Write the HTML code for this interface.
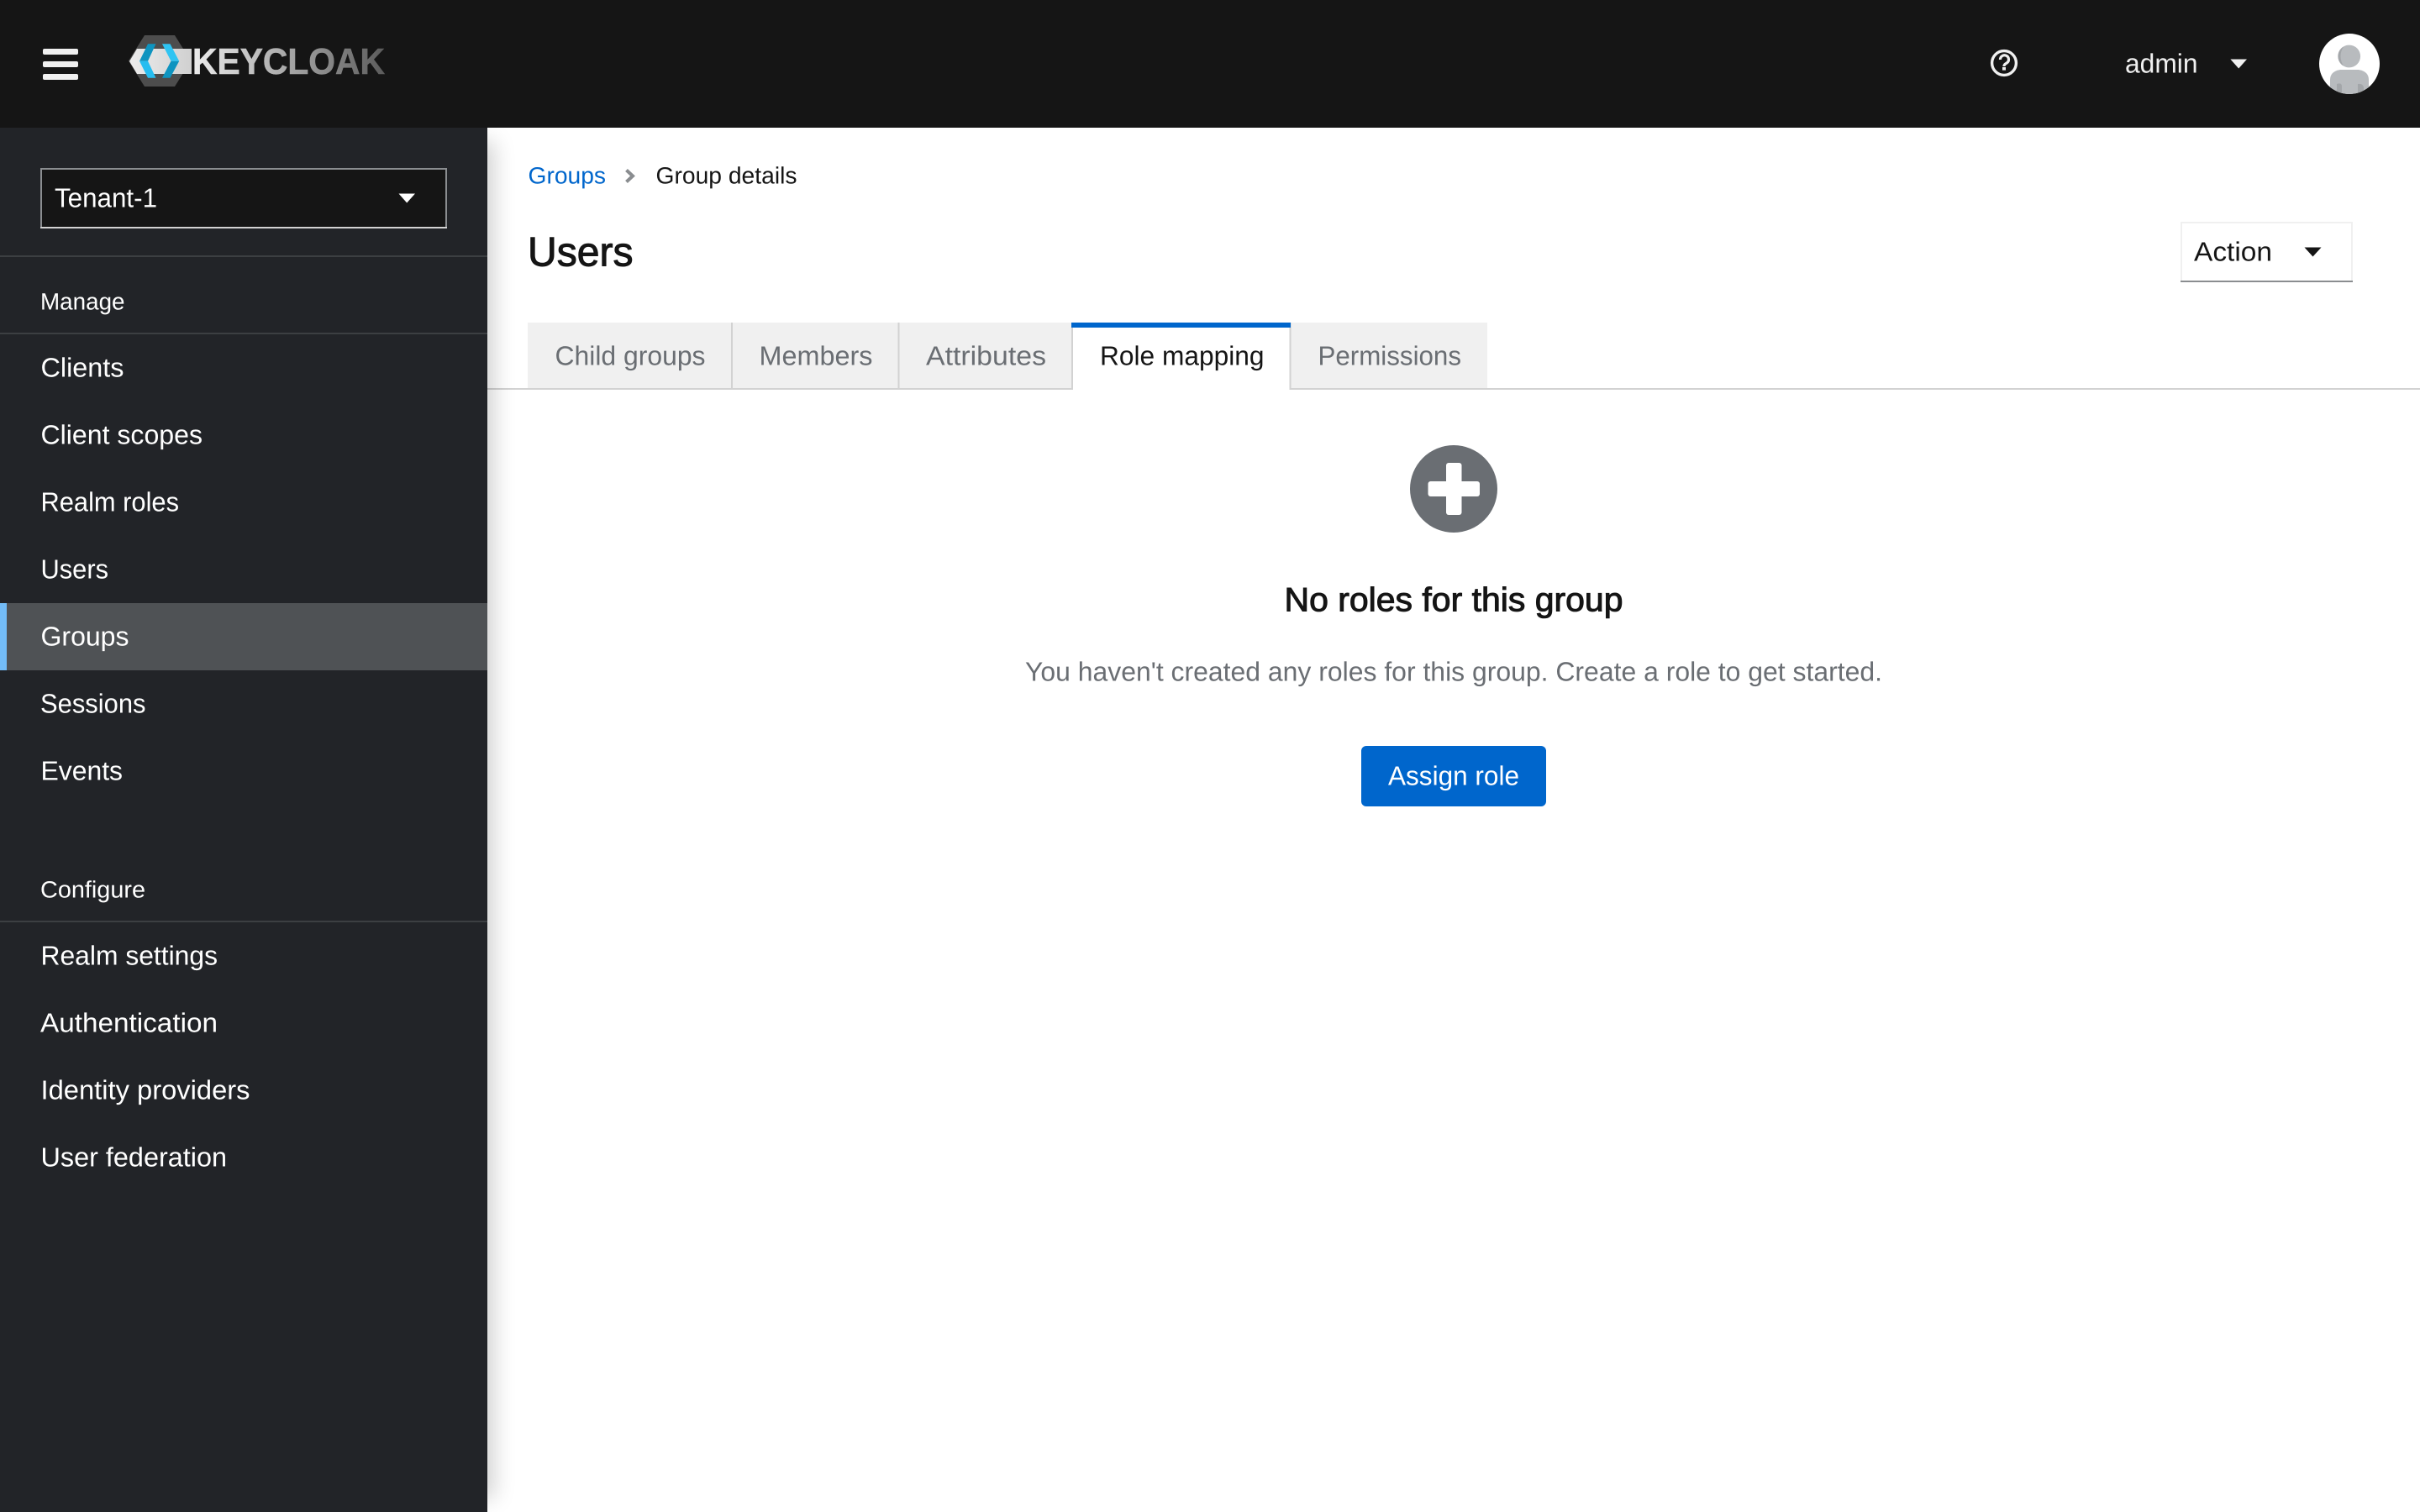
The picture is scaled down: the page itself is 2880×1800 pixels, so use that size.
<!DOCTYPE html>
<html lang="en">
<head>
<meta charset="utf-8">
<title>Keycloak - Group details</title>
<style>
html,body{margin:0;padding:0;width:2880px;height:1800px;overflow:hidden;background:#fff}
body{position:relative;font-family:"Liberation Sans",sans-serif}
header,nav,main{position:absolute;display:block}
header{left:0;top:0;width:2880px;height:152px;background:#151515;z-index:3}
nav{left:0;top:152px;width:580px;height:1648px;background:#222428;z-index:2;box-shadow:24px 0 24px -16px rgba(3,3,3,.18)}
main{left:580px;top:152px;width:2300px;height:1648px;background:#fff;z-index:1}
svg{position:absolute;left:0;top:0;display:block;overflow:visible}
text{font-family:"Liberation Sans",sans-serif;font-size:32px;text-rendering:geometricPrecision}
.n text,text.w{fill:#fff}
.s{font-size:28px}
.g{fill:#6a6e73}
.d{fill:#151515}
</style>
</head>
<body>
<main>
<svg width="2300" height="1648" viewBox="580 152 2300 1648">
  <!-- breadcrumb -->
  <text class="s" x="628.5" y="218.5" textLength="92.5" lengthAdjust="spacingAndGlyphs" fill="#0066cc">Groups</text>
  <path d="M745.5 202.5 L753 209.5 L745.5 216.5" fill="none" stroke="#8a8d90" stroke-width="4"/>
  <text class="s d" x="780.5" y="218.5" textLength="168" lengthAdjust="spacingAndGlyphs">Group details</text>
  <!-- title -->
  <text class="d" style="font-size:49px;stroke:#151515;stroke-width:1px" x="628" y="316.5" textLength="125.5" lengthAdjust="spacingAndGlyphs">Users</text>
  <!-- action -->
  <rect x="2596" y="265" width="203" height="70" fill="#fff" stroke="#f0f0f0" stroke-width="2"/>
  <rect x="2595" y="334" width="205" height="2" fill="#8a8d90"/>
  <text class="d" x="2611" y="310.5" textLength="93" lengthAdjust="spacingAndGlyphs">Action</text>
  <path d="M2742.5 294.5 H2762.5 L2752.5 305.5 Z" fill="#151515"/>
  <!-- tabs -->
  <rect x="580" y="462" width="2300" height="2" fill="#d2d2d2"/>
  <rect x="628" y="384" width="648" height="78" fill="#f0f0f0"/>
  <rect x="870" y="384" width="2" height="78" fill="#d2d2d2"/>
  <rect x="1068.5" y="384" width="2" height="78" fill="#d2d2d2"/>
  <rect x="1536" y="384" width="234" height="78" fill="#f0f0f0"/>
  <rect x="1277" y="390" width="258" height="74" fill="#fff"/>
  <rect x="1275" y="384" width="2" height="80" fill="#d2d2d2"/>
  <rect x="1534.5" y="384" width="2" height="80" fill="#d2d2d2"/>
  <rect x="1275" y="384" width="261" height="6" fill="#0066cc"/>
  <text class="g" x="660.5" y="434.5" textLength="179" lengthAdjust="spacingAndGlyphs">Child groups</text>
  <text class="g" x="903.5" y="434.5" textLength="135" lengthAdjust="spacingAndGlyphs">Members</text>
  <text class="g" x="1102" y="434.5" textLength="143" lengthAdjust="spacingAndGlyphs">Attributes</text>
  <text class="d" x="1309" y="434.5" textLength="195.5" lengthAdjust="spacingAndGlyphs">Role mapping</text>
  <text class="g" x="1568.5" y="434.5" textLength="170.5" lengthAdjust="spacingAndGlyphs">Permissions</text>
  <!-- empty state -->
  <circle cx="1730" cy="582" r="52" fill="#6a6e73"/>
  <rect x="1699.5" y="573" width="61.5" height="18" rx="3" fill="#fff"/>
  <rect x="1721" y="551" width="18.5" height="62" rx="3" fill="#fff"/>
  <text class="d" style="font-size:40px;stroke:#151515;stroke-width:1px" x="1528.5" y="727.5" textLength="403" lengthAdjust="spacingAndGlyphs">No roles for this group</text>
  <text class="g" x="1220" y="810.5" textLength="1020" lengthAdjust="spacingAndGlyphs">You haven't created any roles for this group. Create a role to get started.</text>
  <rect x="1620" y="888" width="220" height="72" rx="6" fill="#0066cc"/>
  <text class="w" x="1652" y="934.5" textLength="156" lengthAdjust="spacingAndGlyphs">Assign role</text>
</svg>
</main>

<nav class="n">
<svg width="580" height="1648" viewBox="0 152 580 1648">
  <rect x="49" y="201" width="482" height="70" fill="#151515" stroke="#8a8d90" stroke-width="2"/>
  <rect x="48" y="270" width="484" height="2" fill="#d2d2d2"/>
  <text x="65" y="246.5" textLength="122" lengthAdjust="spacingAndGlyphs">Tenant-1</text>
  <path d="M474.5 230.5 H494 L484.2 241.5 Z" fill="#fff"/>
  <rect x="0" y="304" width="580" height="2" fill="#3c3f42"/>

  <text class="s" x="48" y="368.5" textLength="100.5" lengthAdjust="spacingAndGlyphs">Manage</text>
  <rect x="0" y="396" width="580" height="2" fill="#3c3f42"/>
  <text x="48.5" y="448.5" textLength="99" lengthAdjust="spacingAndGlyphs">Clients</text>
  <text x="48.5" y="528.5" textLength="192.5" lengthAdjust="spacingAndGlyphs">Client scopes</text>
  <text x="48.5" y="608.5" textLength="164.5" lengthAdjust="spacingAndGlyphs">Realm roles</text>
  <text x="48.5" y="688.5" textLength="80.5" lengthAdjust="spacingAndGlyphs">Users</text>
  <rect x="0" y="718" width="580" height="80" fill="#4f5255"/>
  <rect x="0" y="718" width="8" height="80" fill="#73bcf7"/>
  <text x="48.5" y="768.5" textLength="105" lengthAdjust="spacingAndGlyphs">Groups</text>
  <text x="48" y="848.5" textLength="125.5" lengthAdjust="spacingAndGlyphs">Sessions</text>
  <text x="48.5" y="928.5" textLength="97.5" lengthAdjust="spacingAndGlyphs">Events</text>

  <text class="s" x="48" y="1068.5" textLength="125" lengthAdjust="spacingAndGlyphs">Configure</text>
  <rect x="0" y="1096" width="580" height="2" fill="#3c3f42"/>
  <text x="48.5" y="1148.5" textLength="210.5" lengthAdjust="spacingAndGlyphs">Realm settings</text>
  <text x="48" y="1228.5" textLength="211" lengthAdjust="spacingAndGlyphs">Authentication</text>
  <text x="48.5" y="1308.5" textLength="249" lengthAdjust="spacingAndGlyphs">Identity providers</text>
  <text x="48.5" y="1388.5" textLength="221.5" lengthAdjust="spacingAndGlyphs">User federation</text>
</svg>
</nav>

<header>
<svg width="2880" height="152" viewBox="0 0 2880 152">
  <defs>
    <linearGradient id="kc" gradientUnits="userSpaceOnUse" x1="230" y1="0" x2="457" y2="0">
      <stop offset="0" stop-color="#ececec"/>
      <stop offset=".45" stop-color="#aeaeae"/>
      <stop offset="1" stop-color="#5c5c5c"/>
    </linearGradient>
    <linearGradient id="band" gradientUnits="userSpaceOnUse" x1="154" y1="0" x2="228" y2="0">
      <stop offset="0" stop-color="#ececec"/>
      <stop offset="1" stop-color="#d0d0d0"/>
    </linearGradient>
    <clipPath id="av"><circle cx="2796" cy="76" r="36"/></clipPath>
  </defs>
  <rect x="51" y="58" width="42" height="7" rx="2" fill="#f0f0f0"/>
  <rect x="51" y="73" width="42" height="7" rx="2" fill="#f0f0f0"/>
  <rect x="51" y="88" width="42" height="7" rx="2" fill="#f0f0f0"/>
  <!-- logo -->
  <path d="M172 42 H208 L227 72.5 L208 103 H172 L153 72.5 Z" fill="#4d4d4d"/>
  <path d="M163 58 H228 V88 H163 L154 73 Z" fill="url(#band)"/>
  <path d="M176 52.3 H185.5 L176 72.7 H166 Z" fill="#0e94c0"/>
  <path d="M166 72.7 H176 L185.5 92.7 H176 Z" fill="#26bdf0"/>
  <path d="M193 52.3 H202.5 L213.2 72.7 H203.5 Z" fill="#2fc4f2"/>
  <path d="M203.5 72.7 H213.2 L202.5 92.7 H193 Z" fill="#0e94c0"/>
  <text x="229" y="88" style="font-size:43.6px;font-weight:700;stroke:url(#kc);stroke-width:.6px" fill="url(#kc)" textLength="229" lengthAdjust="spacingAndGlyphs">KEYCLOAK</text>
  <!-- help -->
  <circle cx="2385" cy="75" r="14.4" fill="none" stroke="#f0f0f0" stroke-width="3.4"/>
  <path d="M2380.5 71 A5 5 0 1 1 2388.2 75 C2386 76.4 2385 76.8 2385 79" fill="none" stroke="#f0f0f0" stroke-width="3.2"/>
  <rect x="2383" y="80" width="4" height="3.6" fill="#f0f0f0"/>
  <text x="2529" y="86.5" textLength="86.5" lengthAdjust="spacingAndGlyphs" fill="#f0f0f0">admin</text>
  <path d="M2654.4 70.5 H2674 L2664.2 81.5 Z" fill="#f0f0f0"/>
  <!-- avatar -->
  <circle cx="2796" cy="76" r="36" fill="#fff"/>
  <g clip-path="url(#av)">
    <ellipse cx="2795.7" cy="67" rx="13.4" ry="13.4" fill="#b8bbbe"/>
    <path d="M2789 55.5 A13.4 13.4 0 0 0 2789 78.5 Q2782 67 2789 55.5 Z" fill="#a3a6a9"/>
    <path d="M2773 114 V95 Q2773 85 2785 83 H2807 Q2819 85 2819 95 V114 Z" fill="#b8bbbe"/>
    <path d="M2781 114 V100 Q2787 98 2787 103 V114 Z" fill="#a3a6a9"/>
    <path d="M2806 114 V100 Q2812 99 2813 104 L2813 114 Z" fill="#a3a6a9"/>
  </g>
</svg>
</header>
</body>
</html>
